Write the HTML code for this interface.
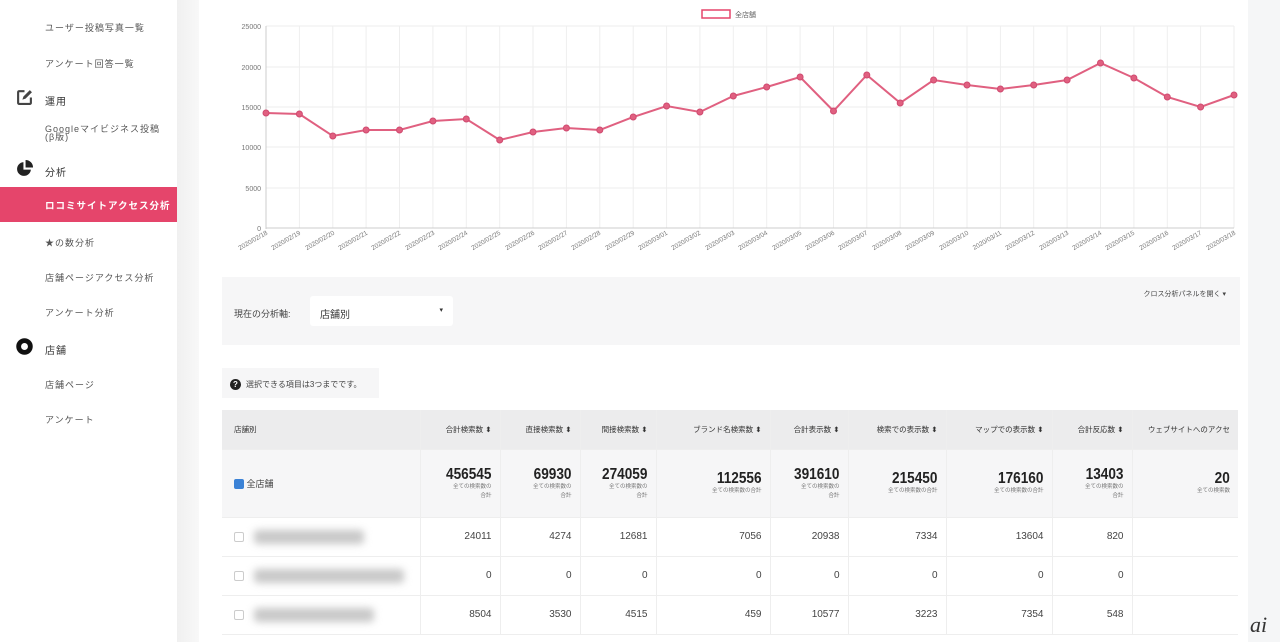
<!DOCTYPE html>
<html><head><meta charset="utf-8">
<style>
*{margin:0;padding:0;box-sizing:border-box}
body{width:1280px;height:642px;overflow:hidden;background:#fff;font-family:"Liberation Sans","Noto Sans CJK JP",sans-serif;color:#444;position:relative}
.side{position:absolute;left:0;top:0;width:177px;height:642px;background:#fff}
.band{position:absolute;left:177px;top:0;width:22px;height:642px;background:linear-gradient(90deg,#f0f0f0,#f8f8f8)}
.rband{position:absolute;left:1248px;top:0;width:32px;height:642px;background:#f5f6f7}
.si{position:absolute;left:45px;font-size:9px;color:#555;letter-spacing:1px}
.sec{position:absolute;left:45px;font-size:10px;color:#333;letter-spacing:1px}
.ico{position:absolute;left:16px;width:17px;height:17px}
.act{position:absolute;left:0;top:187px;width:177px;height:35px;background:#e5456b}
.act span{position:absolute;left:45px;top:11px;color:#fff;font-size:9.5px;font-weight:bold;letter-spacing:1px}
.panel{position:absolute;left:222px;top:277px;width:1018px;height:68px;background:#f6f6f7}
.sel{position:absolute;left:310px;top:296px;width:143px;height:30px;background:#fff;border-radius:3px;font-size:10px;color:#333;padding:10px 0 0 10px}
.note{position:absolute;left:222px;top:368px;width:157px;height:30px;background:#f6f6f7;font-size:8px;color:#444;padding:11px 0 0 24px}
table{position:absolute;left:222px;top:410px;border-collapse:collapse;font-size:9px}
td,th{border-right:1px solid #eee;border-bottom:1px solid #eee}
th{background:#ececed;height:39px;font-weight:normal;font-size:7.5px;color:#333;text-align:right;padding-right:8px;white-space:nowrap}
.tot td{background:#f6f6f7;height:68px;text-align:right;padding-right:8px;vertical-align:middle}
.big{font-size:16px;color:#222;line-height:17px;font-weight:bold;display:inline-block;transform:scaleX(0.85);transform-origin:right}
.sm{font-size:5.5px;color:#777;line-height:9px}
.r td{height:39px;text-align:right;padding-right:8px;font-size:10px;color:#444}
.cb{display:inline-block;width:10px;height:10px;border:1px solid #ccc;border-radius:2px;vertical-align:middle;background:#fff}
.blur{display:inline-block;height:14px;background:#c8c8c8;filter:blur(4px);vertical-align:middle;margin-left:10px;border-radius:4px}
</style></head><body>
<div class="side">
<div class="si" style="top:21px">ユーザー投稿写真一覧</div>
<div class="si" style="top:57px">アンケート回答一覧</div>
<svg class="ico" style="top:89px" viewBox="0 0 16 16"><path d="M8 2H3a1 1 0 0 0-1 1v10a1 1 0 0 0 1 1h10a1 1 0 0 0 1-1V8" fill="none" stroke="#444" stroke-width="2"/><path d="M6 10l1-3 6-6 2 2-6 6z" fill="#444"/></svg>
<div class="sec" style="top:93px">運用</div>
<div class="si" style="top:125px;line-height:8px">Googleマイビジネス投稿<br>(β版)</div>
<svg class="ico" style="top:160px" viewBox="0 0 16 16"><path d="M7 2A6.5 6.5 0 1 0 14 9H7z" fill="#222"/><path d="M9 0v7h7A7 7 0 0 0 9 0z" fill="#222"/></svg>
<div class="sec" style="top:164px">分析</div>
<div class="act"><span>ロコミサイトアクセス分析</span></div>
<div class="si" style="top:236px">★の数分析</div>
<div class="si" style="top:271px">店舗ページアクセス分析</div>
<div class="si" style="top:306px">アンケート分析</div>
<svg class="ico" style="top:338px" viewBox="0 0 16 16"><circle cx="8" cy="8" r="5.5" fill="none" stroke="#111" stroke-width="4.5"/></svg>
<div class="sec" style="top:342px">店舗</div>
<div class="si" style="top:378px">店舗ページ</div>
<div class="si" style="top:413px">アンケート</div>
</div>
<div class="band"></div>
<div class="rband"></div>
<svg style="position:absolute;left:0;top:0" width="1248" height="270" font-family="Liberation Sans" >
<g stroke="#eeeeee" stroke-width="1">
<line x1="266" y1="26" x2="1234" y2="26"/><line x1="266" y1="67" x2="1234" y2="67"/><line x1="266" y1="107" x2="1234" y2="107"/><line x1="266" y1="147" x2="1234" y2="147"/><line x1="266" y1="188" x2="1234" y2="188"/>
<line x1="299.4" y1="26" x2="299.4" y2="228"/><line x1="332.8" y1="26" x2="332.8" y2="228"/><line x1="366.1" y1="26" x2="366.1" y2="228"/><line x1="399.5" y1="26" x2="399.5" y2="228"/><line x1="432.9" y1="26" x2="432.9" y2="228"/><line x1="466.3" y1="26" x2="466.3" y2="228"/><line x1="499.7" y1="26" x2="499.7" y2="228"/><line x1="533" y1="26" x2="533" y2="228"/><line x1="566.4" y1="26" x2="566.4" y2="228"/><line x1="599.8" y1="26" x2="599.8" y2="228"/><line x1="633.2" y1="26" x2="633.2" y2="228"/><line x1="666.6" y1="26" x2="666.6" y2="228"/><line x1="699.9" y1="26" x2="699.9" y2="228"/><line x1="733.3" y1="26" x2="733.3" y2="228"/><line x1="766.7" y1="26" x2="766.7" y2="228"/><line x1="800.1" y1="26" x2="800.1" y2="228"/><line x1="833.5" y1="26" x2="833.5" y2="228"/><line x1="866.8" y1="26" x2="866.8" y2="228"/><line x1="900.2" y1="26" x2="900.2" y2="228"/><line x1="933.6" y1="26" x2="933.6" y2="228"/><line x1="967" y1="26" x2="967" y2="228"/><line x1="1000.4" y1="26" x2="1000.4" y2="228"/><line x1="1033.7" y1="26" x2="1033.7" y2="228"/><line x1="1067.1" y1="26" x2="1067.1" y2="228"/><line x1="1100.5" y1="26" x2="1100.5" y2="228"/><line x1="1133.9" y1="26" x2="1133.9" y2="228"/><line x1="1167.3" y1="26" x2="1167.3" y2="228"/><line x1="1200.6" y1="26" x2="1200.6" y2="228"/><line x1="1234" y1="26" x2="1234" y2="228"/>
</g>
<line x1="266" y1="26" x2="266" y2="229" stroke="#ccc"/><line x1="266" y1="228" x2="1234" y2="228" stroke="#ccc"/>
<g font-size="7" fill="#777" text-anchor="end">
<text x="261" y="29">25000</text><text x="261" y="70">20000</text><text x="261" y="110">15000</text><text x="261" y="150">10000</text><text x="261" y="191">5000</text><text x="261" y="231">0</text>
</g>
<rect x="702" y="10" width="28" height="8" fill="#fff" stroke="#e5456b" stroke-width="1.5"/>
<text x="735" y="17" font-size="7" fill="#666" font-family="Liberation Sans,Noto Sans CJK JP">全店舗</text>
<polyline fill="none" stroke="#e06080" stroke-width="2" points="266,113 299.4,114 332.8,136 366.1,130 399.5,130 432.9,121 466.3,119 499.7,140 533,132 566.4,128 599.8,130 633.2,117 666.6,106 699.9,112 733.3,96 766.7,87 800.1,77 833.5,111 866.8,75 900.2,103 933.6,80 967,85 1000.4,89 1033.7,85 1067.1,80 1100.5,63 1133.9,78 1167.3,97 1200.6,107 1234,95"/>
<g fill="#e06080" stroke="#d04a70" stroke-width="1">
<circle cx="266" cy="113" r="3"/><circle cx="299.4" cy="114" r="3"/><circle cx="332.8" cy="136" r="3"/><circle cx="366.1" cy="130" r="3"/><circle cx="399.5" cy="130" r="3"/><circle cx="432.9" cy="121" r="3"/><circle cx="466.3" cy="119" r="3"/><circle cx="499.7" cy="140" r="3"/><circle cx="533" cy="132" r="3"/><circle cx="566.4" cy="128" r="3"/><circle cx="599.8" cy="130" r="3"/><circle cx="633.2" cy="117" r="3"/><circle cx="666.6" cy="106" r="3"/><circle cx="699.9" cy="112" r="3"/><circle cx="733.3" cy="96" r="3"/><circle cx="766.7" cy="87" r="3"/><circle cx="800.1" cy="77" r="3"/><circle cx="833.5" cy="111" r="3"/><circle cx="866.8" cy="75" r="3"/><circle cx="900.2" cy="103" r="3"/><circle cx="933.6" cy="80" r="3"/><circle cx="967" cy="85" r="3"/><circle cx="1000.4" cy="89" r="3"/><circle cx="1033.7" cy="85" r="3"/><circle cx="1067.1" cy="80" r="3"/><circle cx="1100.5" cy="63" r="3"/><circle cx="1133.9" cy="78" r="3"/><circle cx="1167.3" cy="97" r="3"/><circle cx="1200.6" cy="107" r="3"/><circle cx="1234" cy="95" r="3"/>
</g>
<g font-size="6.5" fill="#777" text-anchor="end">
<text transform="translate(268,234) rotate(-30)">2020/02/18</text><text transform="translate(301,234) rotate(-30)">2020/02/19</text><text transform="translate(335,234) rotate(-30)">2020/02/20</text><text transform="translate(368,234) rotate(-30)">2020/02/21</text><text transform="translate(401,234) rotate(-30)">2020/02/22</text><text transform="translate(435,234) rotate(-30)">2020/02/23</text><text transform="translate(468,234) rotate(-30)">2020/02/24</text><text transform="translate(501,234) rotate(-30)">2020/02/25</text><text transform="translate(535,234) rotate(-30)">2020/02/26</text><text transform="translate(568,234) rotate(-30)">2020/02/27</text><text transform="translate(601,234) rotate(-30)">2020/02/28</text><text transform="translate(635,234) rotate(-30)">2020/02/29</text><text transform="translate(668,234) rotate(-30)">2020/03/01</text><text transform="translate(701,234) rotate(-30)">2020/03/02</text><text transform="translate(735,234) rotate(-30)">2020/03/03</text><text transform="translate(768,234) rotate(-30)">2020/03/04</text><text transform="translate(802,234) rotate(-30)">2020/03/05</text><text transform="translate(835,234) rotate(-30)">2020/03/06</text><text transform="translate(868,234) rotate(-30)">2020/03/07</text><text transform="translate(902,234) rotate(-30)">2020/03/08</text><text transform="translate(935,234) rotate(-30)">2020/03/09</text><text transform="translate(969,234) rotate(-30)">2020/03/10</text><text transform="translate(1002,234) rotate(-30)">2020/03/11</text><text transform="translate(1035,234) rotate(-30)">2020/03/12</text><text transform="translate(1069,234) rotate(-30)">2020/03/13</text><text transform="translate(1102,234) rotate(-30)">2020/03/14</text><text transform="translate(1135,234) rotate(-30)">2020/03/15</text><text transform="translate(1169,234) rotate(-30)">2020/03/16</text><text transform="translate(1202,234) rotate(-30)">2020/03/17</text><text transform="translate(1236,234) rotate(-30)">2020/03/18</text>
</g>
</svg>
<div class="panel">
<div style="position:absolute;left:12px;top:30px;font-size:9px;color:#444">現在の分析軸:</div>
<div style="position:absolute;right:14px;top:12px;font-size:7px;color:#444">クロス分析パネルを開く ▾</div>
</div>
<div class="sel">店舗別<span style="position:absolute;right:10px;top:10px;font-size:7px">▾</span></div>
<div class="note"><span style="position:absolute;left:8px;top:11px;width:11px;height:11px;border-radius:50%;background:#222;color:#fff;font-size:8px;text-align:center;line-height:11px;font-weight:bold">?</span>選択できる項目は3つまでです。</div>
<table>
<tr><th style="width:198px;text-align:left;padding-left:12px">店舗別</th><th style="width:80px">合計検索数 ⬍</th><th style="width:80px">直接検索数 ⬍</th><th style="width:76px">間接検索数 ⬍</th><th style="width:114px">ブランド名検索数 ⬍</th><th style="width:78px">合計表示数 ⬍</th><th style="width:98px">検索での表示数 ⬍</th><th style="width:106px">マップでの表示数 ⬍</th><th style="width:80px">合計反応数 ⬍</th><th style="width:106px;border-right:none">ウェブサイトへのアクセ</th></tr>
<tr class="tot"><td style="text-align:left;padding-left:12px;font-size:9px"><span class="cb" style="background:#3b82d6;border-color:#3b82d6"></span> 全店舗</td>
<td><div class="big">456545</div><div class="sm">全ての検索数の<br>合計</div></td>
<td><div class="big">69930</div><div class="sm">全ての検索数の<br>合計</div></td>
<td><div class="big">274059</div><div class="sm">全ての検索数の<br>合計</div></td>
<td><div class="big">112556</div><div class="sm">全ての検索数の合計</div></td>
<td><div class="big">391610</div><div class="sm">全ての検索数の<br>合計</div></td>
<td><div class="big">215450</div><div class="sm">全ての検索数の合計</div></td>
<td><div class="big">176160</div><div class="sm">全ての検索数の合計</div></td>
<td><div class="big">13403</div><div class="sm">全ての検索数の<br>合計</div></td>
<td style="border-right:none"><div class="big">20</div><div class="sm">全ての検索数</div></td></tr>
<tr class="r"><td style="text-align:left;padding-left:12px"><span class="cb"></span><span class="blur" style="width:110px"></span></td><td>24011</td><td>4274</td><td>12681</td><td>7056</td><td>20938</td><td>7334</td><td>13604</td><td>820</td><td style="border-right:none"></td></tr>
<tr class="r"><td style="text-align:left;padding-left:12px"><span class="cb"></span><span class="blur" style="width:150px"></span></td><td>0</td><td>0</td><td>0</td><td>0</td><td>0</td><td>0</td><td>0</td><td>0</td><td style="border-right:none"></td></tr>
<tr class="r"><td style="text-align:left;padding-left:12px"><span class="cb"></span><span class="blur" style="width:120px"></span></td><td>8504</td><td>3530</td><td>4515</td><td>459</td><td>10577</td><td>3223</td><td>7354</td><td>548</td><td style="border-right:none"></td></tr>
</table>
<div style="position:absolute;left:1250px;top:612px;font-family:'Liberation Serif',serif;font-style:italic;font-size:22px;color:#333">ai</div>
</body></html>
